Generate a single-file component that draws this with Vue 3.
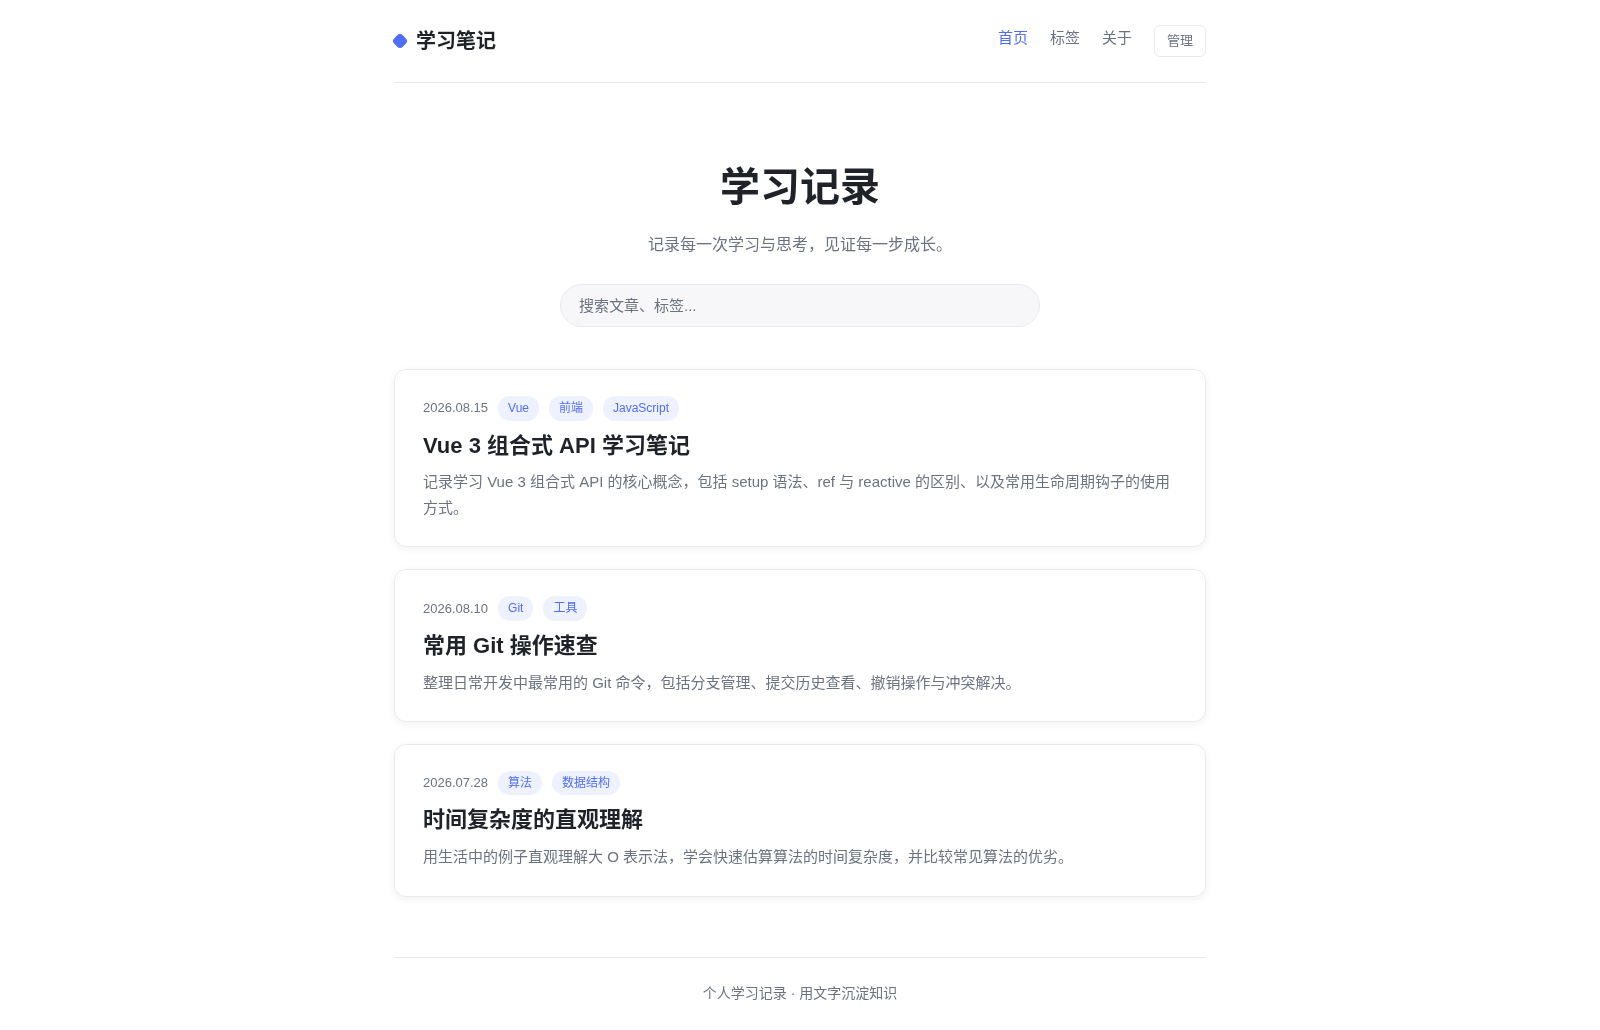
<script setup>
// 学习笔记首页：头部导航 + 标题区 + 文章列表
const posts = [
  {
    date: '2026.08.15',
    tags: ['Vue', '前端', 'JavaScript'],
    title: 'Vue 3 组合式 API 学习笔记',
    desc: '记录学习 Vue 3 组合式 API 的核心概念，包括 setup 语法、ref 与 reactive 的区别、以及常用生命周期钩子的使用方式。',
  },
  {
    date: '2026.08.10',
    tags: ['Git', '工具'],
    title: '常用 Git 操作速查',
    desc: '整理日常开发中最常用的 Git 命令，包括分支管理、提交历史查看、撤销操作与冲突解决。',
  },
  {
    date: '2026.07.28',
    tags: ['算法', '数据结构'],
    title: '时间复杂度的直观理解',
    desc: '用生活中的例子直观理解大 O 表示法，学会快速估算算法的时间复杂度，并比较常见算法的优劣。',
  },
]
</script>

<template>
  <div class="page" lang="zh-CN">
    <header class="header">
      <a class="logo"><span class="logo-dot"></span>学习笔记</a>
      <nav class="nav">
        <a class="nav-link active">首页</a>
        <a class="nav-link">标签</a>
        <a class="nav-link">关于</a>
        <button type="button" class="admin-btn">管理</button>
      </nav>
    </header>

    <section class="hero">
      <h1>学习记录</h1>
      <p>记录每一次学习与思考，见证每一步成长。</p>
      <input class="search" type="text" placeholder="搜索文章、标签..." />
    </section>

    <main class="list">
      <article v-for="post in posts" :key="post.title" class="card">
        <div class="meta">
          <span class="date">{{ post.date }}</span>
          <span v-for="tag in post.tags" :key="tag" class="tag">{{ tag }}</span>
        </div>
        <h2>{{ post.title }}</h2>
        <p>{{ post.desc }}</p>
      </article>
    </main>

    <footer class="footer">个人学习记录 · 用文字沉淀知识</footer>
  </div>
</template>

<style>
body {
  background: #fff;
}
</style>

<style scoped>
.page {
  box-sizing: border-box;
  max-width: 860px;
  margin: 0 auto;
  padding: 0 24px;
  font-family: "Liberation Sans", "Noto Sans CJK SC", sans-serif;
  line-height: 1.7;
  color: #1f2329;
  /* 独立合成层，文字走灰度抗锯齿 */
  will-change: transform;
}

.header {
  display: flex;
  align-items: center;
  justify-content: space-between;
  height: 82px;
  border-bottom: 1px solid #e8eaed;
}
.logo {
  display: flex;
  align-items: center;
  gap: 10px;
  font-size: 20px;
  font-weight: 700;
}
.logo-dot {
  width: 12px;
  height: 12px;
  background: #4f6ef7;
  border-radius: 4px;
  transform: rotate(45deg);
}
.nav {
  display: flex;
  align-items: center;
  gap: 22px;
}
.nav-link {
  font-size: 15px;
  color: #6b7280;
  margin-top: -6px;
}
.nav-link.active {
  color: #4f6ef7;
}
.admin-btn {
  font-family: inherit;
  font-size: 13px;
  line-height: 1.7;
  color: #6b7280;
  background: #fff;
  border: 1px solid #e8eaed;
  border-radius: 6px;
  padding: 4px 12px;
}

.hero {
  padding: 81px 0 42px;
  display: flex;
  flex-direction: column;
  align-items: center;
}
.hero h1 {
  margin: 0;
  font-size: 40px;
  line-height: 46px;
  font-weight: 700;
}
.hero p {
  margin: 21px 0 0;
  font-size: 16px;
  color: #6b7280;
}
.search {
  box-sizing: border-box;
  width: 480px;
  height: 43px;
  margin-top: 26px;
  padding: 0 18px;
  font-family: inherit;
  font-size: 15px;
  background: #f7f7fa;
  border: 1px solid #e8e9ee;
  border-radius: 22px;
  outline: none;
}
.search::placeholder {
  color: #6b7280;
}

.list {
  display: flex;
  flex-direction: column;
  gap: 22px;
}
.card {
  padding: 26px 28px;
  background: #fff;
  border: 1px solid #e8eaed;
  border-radius: 12px;
  box-shadow: 0 2px 8px rgba(0, 0, 0, 0.06);
}
.meta {
  display: flex;
  align-items: center;
  gap: 10px;
}
.date {
  font-size: 13px;
  color: #6b7280;
}
.tag {
  font-size: 12px;
  padding: 2px 10px;
  color: #4f6ef7;
  background: #eef1ff;
  border-radius: 12px;
}
.card h2 {
  margin: 10px 0 0;
  font-size: 22px;
  line-height: 1.4;
  font-weight: 700;
}
.card p {
  margin: 8px 0 0;
  font-size: 15px;
  color: #6b7280;
}

.footer {
  margin-top: 60px;
  padding: 24px 0 32px;
  border-top: 1px solid #e8eaed;
  text-align: center;
  font-size: 14px;
  color: #6b7280;
}
</style>
